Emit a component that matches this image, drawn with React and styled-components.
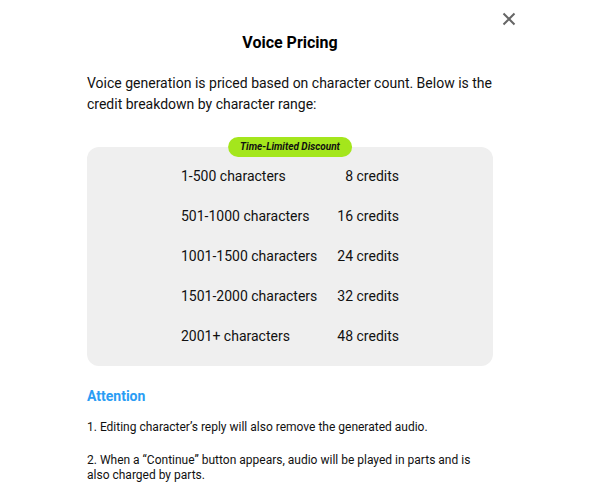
import React from "react";
import styled, { createGlobalStyle } from "styled-components";

const Global = createGlobalStyle`
  html, body { margin: 0; padding: 0; background: #fff; }
  body { font-family: Roboto, "Noto Sans", Arial, sans-serif; color: #111; }
`;

const Modal = styled.div`
  position: relative;
  width: 594px;
  height: 504px;
  box-sizing: border-box;
  padding: 31px 101px 0 87px;
  display: flex;
  flex-direction: column;
`;

const Close = styled.button`
  position: absolute;
  top: 12px;
  right: 78px;
  width: 14px;
  height: 14px;
  padding: 0;
  border: 0;
  background: none;
  display: flex;
  align-items: center;
  justify-content: center;
`;

const Title = styled.h2`
  margin: 0;
  font-size: 16px;
  font-weight: 700;
  line-height: 24px;
  text-align: center;
  color: #000;
`;

const Intro = styled.p`
  margin: 18px -12px 0 0;
  font-size: 14px;
  line-height: 21px;
  color: #111;
`;

const PriceBox = styled.div`
  position: relative;
  margin-top: 32px;
  background: #efefef;
  border-radius: 12px;
  padding: 19px 0 20px;
  display: flex;
  justify-content: center;
`;

const Badge = styled.div`
  position: absolute;
  top: -10px;
  left: 50%;
  transform: translateX(-50%);
  height: 20px;
  padding: 0 12px;
  border-radius: 10px;
  background: #a4e61c;
  font-size: 10px;
  font-weight: 700;
  font-style: italic;
  line-height: 20px;
  color: #111;
  white-space: nowrap;
`;

const Table = styled.div`
  display: grid;
  grid-template-columns: auto auto;
  column-gap: 20px;
  row-gap: 20px;
  font-size: 14px;
  line-height: 20px;
  color: #111;
`;

const Cell = styled.div`
  text-align: ${(p) => (p.$right ? "right" : "left")};
`;

const Attention = styled.h3`
  margin: 20px 0 0;
  font-size: 14px;
  font-weight: 700;
  line-height: 20px;
  color: #2a9df4;
`;

const Note = styled.p`
  margin: ${(p) => (p.$first ? "14px" : "18px")} 0 0;
  font-size: 12px;
  line-height: 15px;
  color: #111;
`;

const rows = [
  ["1-500 characters", "8 credits"],
  ["501-1000 characters", "16 credits"],
  ["1001-1500 characters", "24 credits"],
  ["1501-2000 characters", "32 credits"],
  ["2001+ characters", "48 credits"],
];

export default function App() {
  return (
    <>
      <Global />
      <Modal>
        <Close aria-label="close">
          <svg width="14" height="14" viewBox="0 0 14 14">
            <path d="M1.5 1.5 L12.5 12.5 M12.5 1.5 L1.5 12.5" stroke="#666" strokeWidth="2" strokeLinecap="butt" />
          </svg>
        </Close>
        <Title>Voice Pricing</Title>
        <Intro>
          Voice generation is priced based on character count. Below is the credit breakdown by character range:
        </Intro>
        <PriceBox>
          <Badge>Time-Limited Discount</Badge>
          <Table>
            {rows.map(([range, credits]) => (
              <React.Fragment key={range}>
                <Cell>{range}</Cell>
                <Cell $right>{credits}</Cell>
              </React.Fragment>
            ))}
          </Table>
        </PriceBox>
        <Attention>Attention</Attention>
        <Note $first>1. Editing character’s reply will also remove the generated audio.</Note>
        <Note>2. When a “Continue” button appears, audio will be played in parts and is also charged by parts.</Note>
      </Modal>
    </>
  );
}
